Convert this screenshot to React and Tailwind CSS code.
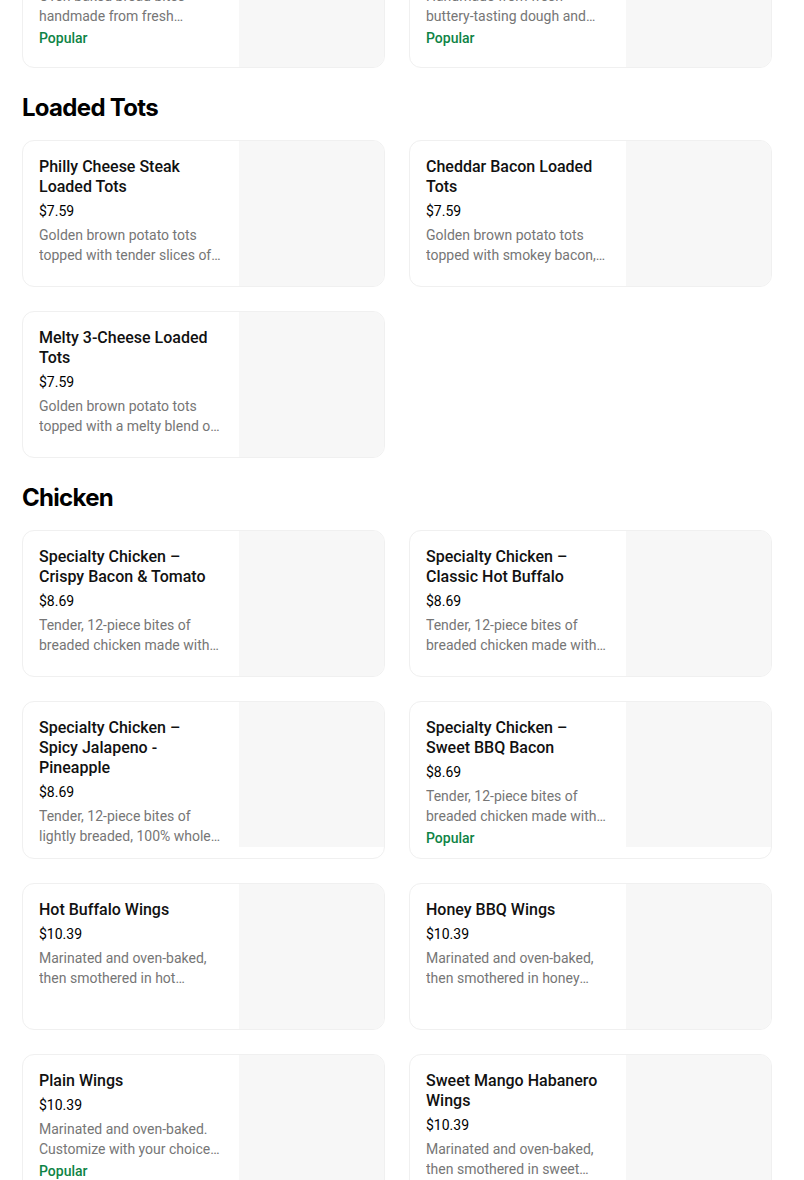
import React from "react";

const sections = [
  {
    title: null,
    items: [
      {
        name: "Crazy Puffs",
        price: "$6.49",
        desc: "Oven-baked bread bites handmade from fresh buttery-tasting dough.",
        popular: true,
      },
      {
        name: "Crazy Bread",
        price: "$4.19",
        desc: "Handmade from fresh buttery-tasting dough and seasoned with garlic and parmesan.",
        popular: true,
      },
    ],
  },
  {
    title: "Loaded Tots",
    items: [
      {
        name: "Philly Cheese Steak Loaded Tots",
        price: "$7.59",
        desc: "Golden brown potato tots topped with tender slices of steak, peppers, onions and cheese.",
      },
      {
        name: "Cheddar Bacon Loaded Tots",
        price: "$7.59",
        desc: "Golden brown potato tots topped with smokey bacon, cheddar cheese and ranch.",
      },
      {
        name: "Melty 3-Cheese Loaded Tots",
        price: "$7.59",
        desc: "Golden brown potato tots topped with a melty blend of three cheeses.",
      },
    ],
  },
  {
    title: "Chicken",
    items: [
      {
        name: "Specialty Chicken – Crispy Bacon & Tomato",
        price: "$8.69",
        desc: "Tender, 12-piece bites of breaded chicken made with 100% whole white meat.",
      },
      {
        name: "Specialty Chicken – Classic Hot Buffalo",
        price: "$8.69",
        desc: "Tender, 12-piece bites of breaded chicken made with 100% whole white meat.",
      },
      {
        name: "Specialty Chicken – Spicy Jalapeno - Pineapple",
        price: "$8.69",
        desc: "Tender, 12-piece bites of lightly breaded, 100% whole white meat chicken.",
      },
      {
        name: "Specialty Chicken – Sweet BBQ Bacon",
        price: "$8.69",
        desc: "Tender, 12-piece bites of breaded chicken made with 100% whole white meat.",
        popular: true,
      },
      {
        name: "Hot Buffalo Wings",
        price: "$10.39",
        desc: "Marinated and oven-baked, then smothered in hot Buffalo-style sauce.",
      },
      {
        name: "Honey BBQ Wings",
        price: "$10.39",
        desc: "Marinated and oven-baked, then smothered in honey barbecue sauce.",
      },
      {
        name: "Plain Wings",
        price: "$10.39",
        desc: "Marinated and oven-baked. Customize with your choice of dipping sauce.",
        popular: true,
      },
      {
        name: "Sweet Mango Habanero Wings",
        price: "$10.39",
        desc: "Marinated and oven-baked, then smothered in sweet mango habanero sauce.",
      },
    ],
  },
];

function Card({ item }) {
  return (
    <div className="flex rounded-xl border border-[#f0f0f0] bg-white overflow-hidden">
      <div className="w-[216px] shrink-0 pl-4 pr-4 pt-4 pb-3 flex flex-col">
        <div className="text-[16px] leading-5 font-medium text-[#111111]">{item.name}</div>
        <div className="mt-1 text-[14px] leading-5 text-black">{item.price}</div>
        <div className="mt-1 text-[14px] leading-5 text-[#767676] line-clamp-2">{item.desc}</div>
        {item.popular && (
          <div className="mt-1 text-[14px] leading-4 font-medium text-[#0e8345]">Popular</div>
        )}
      </div>
      <div className="flex-1 self-start h-[145px] bg-[#f7f7f7]" />
    </div>
  );
}

export default function App() {
  return (
    <div
      className="w-[804px] h-[1180px] overflow-hidden bg-white"
      style={{ fontFamily: "Roboto, 'Liberation Sans', sans-serif" }}
    >
      <div className="-mt-[79px] pl-[22px] pr-[32px]">
        {sections.map((s, i) => (
          <div key={i}>
            {s.title && (
              <h2
                className="mt-6 mb-4 text-[24px] leading-8 font-bold text-black tracking-[-0.7px]"
                style={{ fontFamily: "Inter, 'Liberation Sans', sans-serif" }}
              >
                {s.title}
              </h2>
            )}
            <div className="grid grid-cols-2 gap-6">
              {s.items.map((it, j) => (
                <Card key={j} item={it} />
              ))}
            </div>
          </div>
        ))}
      </div>
    </div>
  );
}
